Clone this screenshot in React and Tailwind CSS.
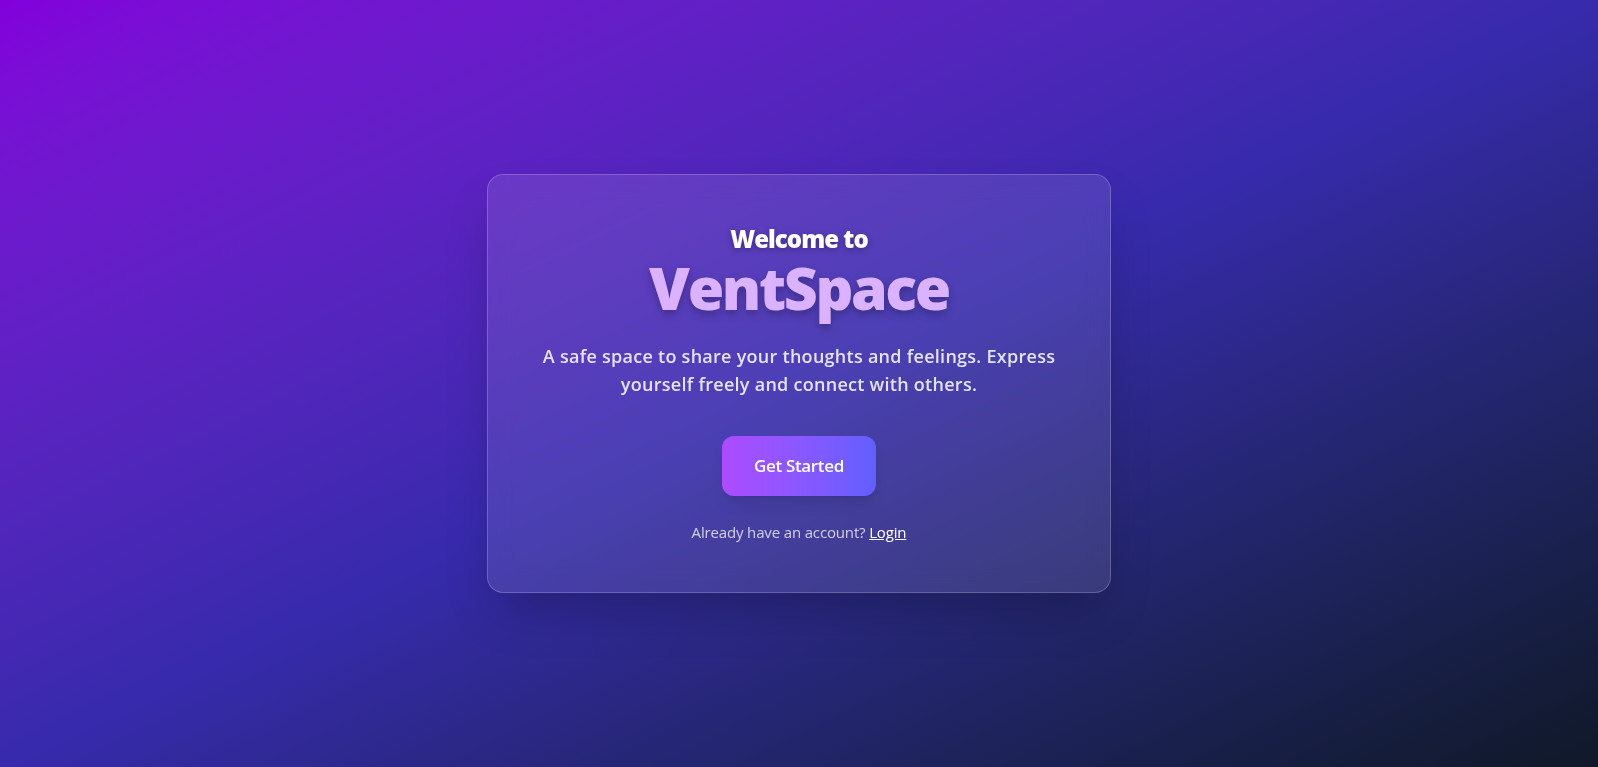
import React from 'react';

export default function App() {
  return (
    <div className="min-h-screen w-full flex items-center justify-center bg-gradient-to-br from-[#8200db] via-[#372aac] to-[#101828] font-['Open_Sans','Noto_Sans',sans-serif]">
      <div className="w-[624px] rounded-2xl border border-white/20 bg-white/10 backdrop-blur-md shadow-2xl px-12 pt-12 pb-12 flex flex-col items-center text-center">
        <h2 className="text-2xl leading-8 font-extrabold text-white tracking-[-0.04em] [text-shadow:0_2px_6px_rgba(0,0,0,0.3)]">
          Welcome to
        </h2>
        <h1 className="text-[59px] leading-[64px] font-extrabold text-[#dab2ff] tracking-[-0.04em] [text-shadow:0_4px_8px_rgba(0,0,0,0.25)]">
          VentSpace
        </h1>
        <p className="mt-[23px] max-w-[528px] text-lg leading-7 font-semibold text-white/85 tracking-[0.015em]">
          A safe space to share your thoughts and feelings. Express yourself freely and connect with others.
        </p>
        <button className="mt-[38px] px-8 py-4 rounded-xl bg-gradient-to-r from-[#ac4bff] to-[#615fff] text-white text-[17px] leading-7 font-semibold tracking-[-0.02em] shadow-lg">
          Get Started
        </button>
        <p className="mt-6 text-[15px] leading-6 text-white/75 tracking-[-0.01em]">
          Already have an account?{' '}
          <a href="#" className="text-white underline">Login</a>
        </p>
      </div>
    </div>
  );
}
